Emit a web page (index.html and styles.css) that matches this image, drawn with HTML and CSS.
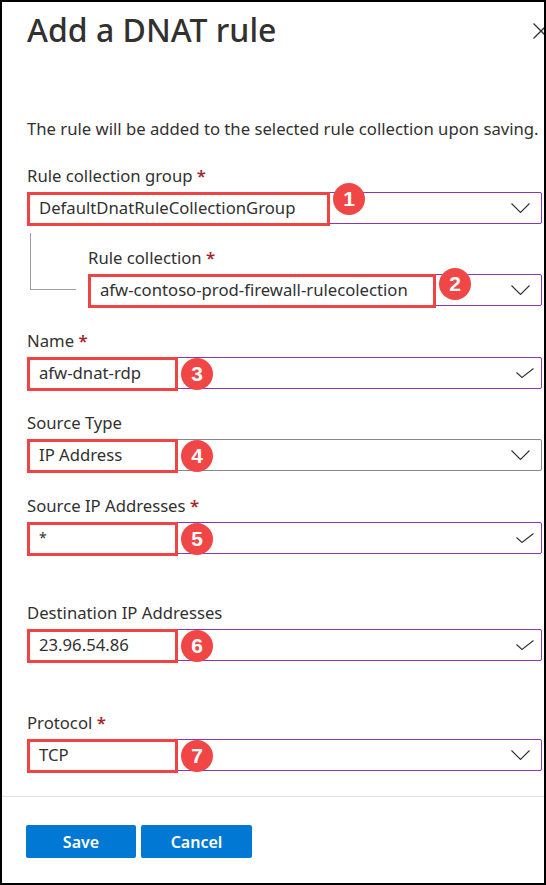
FILE: index.html
```html
<!DOCTYPE html>
<html lang="en">
<head>
<meta charset="utf-8">
<title>Add a DNAT rule</title>
<link rel="stylesheet" href="styles.css">
</head>
<body>
<div class="frame">
  <div class="content">
    <header class="header">
      <h1 class="title">Add a DNAT rule</h1>
      <svg class="close" width="16" height="16" viewBox="0 0 16 16"><path d="M0.5 0.5 L15.5 15.5 M15.5 0.5 L0.5 15.5" fill="none" stroke="#323130" stroke-width="1.3"/></svg>
    </header>
    <p class="desc">The rule will be added to the selected rule collection upon saving.</p>

    <div class="field gap-23">
      <div class="label">Rule collection group <span class="req">*</span></div>
      <div class="input focus">
        <span class="value">DefaultDnatRuleCollectionGroup</span>
        <svg class="chev" width="19" height="10" viewBox="0 0 19 10"><path d="M0.5 0.5 L9.5 9.5 L18.5 0.5" fill="none" stroke="#323130" stroke-width="1.1"/></svg>
        <div class="annot"><div class="redbox w-group"></div><div class="badge up-9">1</div></div>
      </div>
    </div>

    <div class="nested gap-24">
      <div class="connector"></div>
      <div class="field grow">
        <div class="label">Rule collection <span class="req">*</span></div>
        <div class="input focus">
          <span class="value">afw-contoso-prod-firewall-rulecolection</span>
          <svg class="chev" width="19" height="10" viewBox="0 0 19 10"><path d="M0.5 0.5 L9.5 9.5 L18.5 0.5" fill="none" stroke="#323130" stroke-width="1.1"/></svg>
          <div class="annot"><div class="redbox w-coll"></div><div class="badge up-6">2</div></div>
        </div>
      </div>
    </div>

    <div class="field gap-23">
      <div class="label">Name <span class="req">*</span></div>
      <div class="input focus">
        <span class="value">afw-dnat-rdp</span>
        <svg class="check" width="18" height="10" viewBox="0 0 18 10"><path d="M0.5 4.5 L6 9.5 L17.5 0.5" fill="none" stroke="#323130" stroke-width="1.1"/></svg>
        <div class="annot"><div class="redbox w-short"></div><div class="badge">3</div></div>
      </div>
    </div>

    <div class="field gap-24">
      <div class="label">Source Type</div>
      <div class="input">
        <span class="value">IP Address</span>
        <svg class="chev" width="19" height="10" viewBox="0 0 19 10"><path d="M0.5 0.5 L9.5 9.5 L18.5 0.5" fill="none" stroke="#323130" stroke-width="1.1"/></svg>
        <div class="annot"><div class="redbox w-short"></div><div class="badge">4</div></div>
      </div>
    </div>

    <div class="field gap-48">
      <div class="label">Source IP Addresses <span class="req">*</span></div>
      <div class="input focus">
        <span class="value value-star">*</span>
        <svg class="check" width="18" height="10" viewBox="0 0 18 10"><path d="M0.5 4.5 L6 9.5 L17.5 0.5" fill="none" stroke="#323130" stroke-width="1.1"/></svg>
        <div class="annot"><div class="redbox w-short"></div><div class="badge">5</div></div>
      </div>
    </div>

    <div class="field gap-51">
      <div class="label">Destination IP Addresses</div>
      <div class="input focus">
        <span class="value">23.96.54.86</span>
        <svg class="check" width="18" height="10" viewBox="0 0 18 10"><path d="M0.5 4.5 L6 9.5 L17.5 0.5" fill="none" stroke="#323130" stroke-width="1.1"/></svg>
        <div class="annot"><div class="redbox w-short"></div><div class="badge">6</div></div>
      </div>
    </div>

    <div class="field gap-25">
      <div class="label">Protocol <span class="req">*</span></div>
      <div class="input focus">
        <span class="value">TCP</span>
        <svg class="chev" width="19" height="10" viewBox="0 0 19 10"><path d="M0.5 0.5 L9.5 9.5 L18.5 0.5" fill="none" stroke="#323130" stroke-width="1.1"/></svg>
        <div class="annot"><div class="redbox w-short"></div><div class="badge">7</div></div>
      </div>
    </div>
  </div>

  <footer class="footer">
    <button class="btn btn-save" type="button">Save</button>
    <button class="btn btn-cancel" type="button">Cancel</button>
  </footer>
</div>
</body>
</html>
```

FILE: styles.css
```css
* {
  box-sizing: border-box;
}

html, body {
  margin: 0;
  padding: 0;
  background: #ffffff;
}

body {
  font-family: "Noto Sans", "Open Sans", sans-serif;
  font-size: 16.7px;
  color: #323130;
}

.frame {
  width: 546px;
  height: 885px;
  border: 2px solid #000000;
  overflow: hidden;
  display: flex;
  flex-direction: column;
  background: #ffffff;
}

.content {
  padding: 0 2px 0 25px;
}

.header {
  display: flex;
  justify-content: space-between;
  align-items: flex-start;
  margin-top: 8px;
}

.title {
  margin: 0;
  font-size: 32px;
  line-height: 40px;
  font-weight: 500;
  color: #323130;
}

.close {
  margin-top: 13px;
  margin-right: -7px;
  flex: none;
}

.desc {
  margin: 68px 0 25px 0;
  line-height: 22px;
  white-space: nowrap;
}

.field {
  display: flex;
  flex-direction: column;
}

.grow {
  flex: 1;
  min-width: 0;
  margin-left: 12px;
}

.gap-23 { margin-bottom: 23px; }
.gap-24 { margin-bottom: 24px; }
.gap-25 { margin-bottom: 25px; }
.gap-48 { margin-bottom: 48px; }
.gap-51 { margin-bottom: 51px; }

.label {
  line-height: 22px;
  margin-bottom: 5px;
  white-space: nowrap;
}

.req {
  color: #a4262c;
  font-weight: 600;
}

.input {
  position: relative;
  height: 32px;
  border: 1px solid #8a8886;
  border-radius: 2px;
  display: flex;
  align-items: center;
  padding: 0 11px;
}

.input.focus {
  border-color: #8a35b6;
}

.value {
  line-height: 30px;
  white-space: nowrap;
}

.value-star {
  font-size: 14px;
  color: #323130;
}

.chev {
  margin-left: auto;
  flex: none;
}

.check {
  margin-left: auto;
  margin-right: -4px;
  flex: none;
}

.nested {
  display: flex;
  align-items: flex-start;
}

.connector {
  flex: none;
  width: 46px;
  height: 57px;
  margin-top: -14px;
  margin-left: 3px;
  border-left: 1px solid #a19f9d;
  border-bottom: 1px solid #a19f9d;
}

.annot {
  position: absolute;
  left: -1px;
  top: -1px;
  display: flex;
  align-items: center;
  gap: 3px;
  pointer-events: none;
}

.redbox {
  height: 34px;
  border: 3px solid #f04444;
  flex: none;
}

.w-group { width: 303px; }
.w-coll { width: 348px; }
.w-short { width: 151px; }

.badge {
  flex: none;
  width: 32px;
  height: 32px;
  border-radius: 50%;
  background: #f04646;
  color: #ffffff;
  font-family: "Liberation Sans", Arial, sans-serif;
  font-weight: 700;
  font-size: 21px;
  line-height: 32px;
  text-align: center;
}

.up-9 {
  align-self: flex-start;
  margin-top: -9px;
}

.up-6 {
  align-self: flex-start;
  margin-top: -6px;
}

.footer {
  border-top: 1px solid #e1dfdd;
  padding: 28px 24px;
  display: flex;
  gap: 5px;
}

.btn {
  height: 33px;
  border: none;
  border-radius: 2px;
  background: #0078d4;
  color: #ffffff;
  font-family: "Noto Sans", "Open Sans", sans-serif;
  font-size: 16px;
  font-weight: 600;
  padding: 0;
}

.btn-save { width: 110px; }
.btn-cancel { width: 111px; }
```
